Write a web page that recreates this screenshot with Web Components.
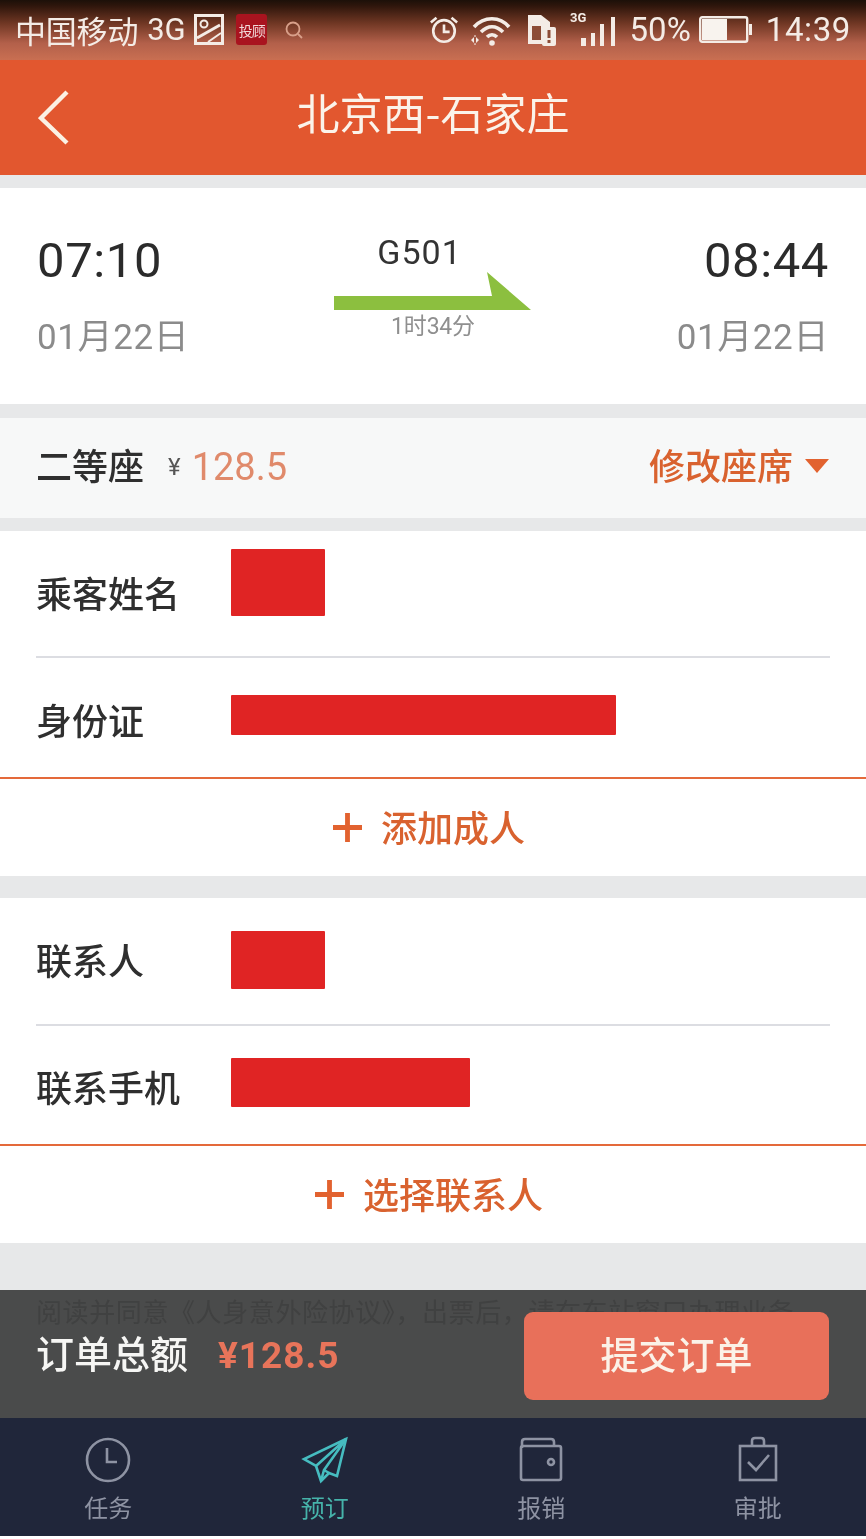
<!DOCTYPE html>
<html lang="zh">
<head>
<meta charset="utf-8">
<title>北京西-石家庄</title>
<style>
html, body { margin: 0; padding: 0; background: #fff; }
body { font-family: "Noto Sans CJK SC", "Liberation Sans", sans-serif; }
app-page { width: 866px; height: 1539px; }
</style>
</head>
<body>
<app-page>
  <status-bar></status-bar>
  <title-bar>北京西-石家庄</title-bar>
  <trip-card></trip-card>
  <seat-row></seat-row>
  <form-group add="添加成人">
    <form-field label="乘客姓名" mask="94" mask-h="67" shift="-11" nudge="-1.5" h="127"></form-field>
    <form-field label="身份证" mask="385" mask-h="40" shift="-3" nudge="1" h="119"></form-field>
  </form-group>
  <form-group add="选择联系人" class="contacts">
    <form-field label="联系人" mask="94" mask-h="58" shift="-1.5" nudge="-2" h="128"></form-field>
    <form-field label="联系手机" mask="239" mask-h="49" shift="-2.5" nudge="0.5" h="118"></form-field>
  </form-group>
  <order-bar></order-bar>
  <tab-bar></tab-bar>
</app-page>

<script>
const latin = 'Roboto, "Noto Sans CJK SC", sans-serif'

class AppPage extends HTMLElement {
  constructor () {
    super()
    this.attachShadow({ mode: 'open' })
    this.shadowRoot.innerHTML = `
<style>
:host { display: flex; flex-direction: column; background: #e7e8e9; overflow: hidden; filter: blur(.4px); }
::slotted(.contacts) { margin-top: 22px; }
</style>
<slot></slot>`
  }
}

class StatusBar extends HTMLElement {
  constructor () {
    super()
    this.attachShadow({ mode: 'open' })
    this.shadowRoot.innerHTML = `
<style>
:host {
  display: flex; align-items: center; height: 60px; padding: 0 15px; box-sizing: border-box;
  background: linear-gradient(#1c1009 0, #2f160c 10%, #6e3623 38%, #b3604a 72%, #c96f52 100%);
  color: #f4ece6; font: 30px ${latin}; white-space: nowrap;
}
.carrier { font-size: 31px; letter-spacing: -.2px; }
.net { margin-left: 9px; font-size: 31px; letter-spacing: -.2px; }
svg { display: block; flex: none; }
.pic { margin-left: 9px; }
.badge {
  margin-left: 12px; width: 31px; height: 31px; border-radius: 3px; background: #a9141f; color: #f1d9d9;
  font: 14px "Noto Sans CJK SC", sans-serif; display: flex; align-items: center; justify-content: center; letter-spacing: -1px;
}
.search { margin-left: 17px; }
.right { margin-left: auto; display: flex; align-items: center; }
.pct { margin-left: 14px; font-size: 33px; }
.clock { margin-left: 14px; font-size: 33px; letter-spacing: .6px; }
.battery { margin-left: 8px; }
</style>
<span class="carrier">中国移动</span><span class="net">3G</span>
<svg class="pic" width="30" height="31" viewBox="0 0 30 31" fill="none" stroke="#f4ece6" stroke-width="3">
  <rect x="1.5" y="1.5" width="27" height="28"/><circle cx="10" cy="10" r="3.5" stroke-width="2"/><path d="M3 24 L26 11" stroke-width="3"/><path d="M14 28 L27 19" stroke-width="2"/>
</svg>
<span class="badge">投顾</span>
<svg class="search" width="20" height="20" viewBox="0 0 20 20" fill="none" stroke="#d9a08a" stroke-width="1.8">
  <circle cx="9" cy="9" r="6.5"/><path d="M14 14 L18 18"/>
</svg>
<div class="right">
  <svg width="30" height="32" viewBox="0 0 32 32" fill="none" stroke="#f4ece6" stroke-width="2.8">
    <circle cx="16" cy="17" r="11.5"/><path d="M16 10 V18 H22"/><path d="M2 8 L8 3 M30 8 L24 3"/>
  </svg>
  <svg style="margin-left:10px" width="44" height="32" viewBox="0 0 42 32" fill="none" stroke="#f4ece6" stroke-width="3.6">
    <path d="M4 13 C14 2 30 2 39 13"/><path d="M11 18 C18 11 26 11 33 18"/><path d="M17 23 C20 20 24 20 27 23"/>
    <circle cx="22" cy="29" r="2.8" fill="#f4ece6" stroke="none"/>
    <path d="M1 26 L6 21 V31 Z M9 26 L4 21 V31 Z" fill="#f4ece6" stroke="none"/>
  </svg>
  <svg style="margin-left:14px" width="30" height="32" viewBox="0 0 30 32">
    <path d="M1 1 H14 L23 8 V30 H1 Z" fill="#f4ece6"/><rect x="5" y="12" width="9" height="14" fill="#8d4c36"/>
    <rect x="15" y="13" width="14" height="19" rx="2" fill="#f4ece6"/><rect x="20.5" y="16" width="3" height="8" fill="#8d4c36"/><rect x="20.5" y="26" width="3" height="3" fill="#8d4c36"/>
  </svg>
  <svg style="margin-left:13px" width="46" height="46" viewBox="0 0 46 46">
    <text x="0" y="15" font-family="Roboto" font-size="13" font-weight="bold" fill="#f4ece6">3G</text>
    <g fill="#f4ece6"><rect x="11" y="31" width="5" height="8"/><rect x="21" y="26" width="4" height="13"/><rect x="30" y="17" width="4" height="22"/><rect x="41" y="10" width="4" height="29"/></g>
  </svg>
  <span class="pct">50%</span>
  <svg class="battery" width="53" height="27" viewBox="0 0 53 27">
    <rect x="1.2" y="1.2" width="47" height="24.6" rx="2" fill="none" stroke="#f4ece6" stroke-width="2.4"/>
    <rect x="3" y="3" width="25" height="21" fill="#f8f3ee"/>
    <rect x="50" y="8" width="3" height="11" fill="#f4ece6"/>
  </svg>
  <span class="clock">14:39</span>
</div>`
  }
}

class TitleBar extends HTMLElement {
  constructor () {
    super()
    this.attachShadow({ mode: 'open' })
    this.shadowRoot.innerHTML = `
<style>
:host {
  display: flex; align-items: center; justify-content: center; position: relative;
  height: 115px; margin-bottom: 13px; background: #e2572f; color: #fbf3ea;
  font: 400 43px "Noto Sans CJK SC", sans-serif; box-sizing: border-box; padding-bottom: 12px;
}
svg { position: absolute; left: 38px; top: 30px; }
</style>
<svg width="32" height="56" viewBox="0 0 32 56" fill="none" stroke="#fbf1e4" stroke-width="4.4">
  <path d="M29 2 L3 28 L29 53"/>
</svg>
<slot></slot>`
  }
}

class TripCard extends HTMLElement {
  constructor () {
    super()
    this.attachShadow({ mode: 'open' })
    this.shadowRoot.innerHTML = `
<style>
:host {
  display: grid; grid-template-columns: 1fr 1fr 1fr; height: 217px; margin-bottom: 14px; padding: 0 37px;
  box-sizing: border-box; background: #fff; font-family: ${latin}; color: #2b2b2b;
}
.end { display: flex; flex-direction: column; padding-top: 43px; }
.end.arrive { align-items: flex-end; }
.time { font-size: 49px; line-height: 60px; letter-spacing: .6px; }
.date { margin-top: 25px; font-size: 35px; line-height: 44px; color: #8b8b8b; letter-spacing: .6px; }
.mid { display: flex; flex-direction: column; align-items: center; }
.no { font-size: 34px; line-height: 40px; margin-top: 44px; margin-right: 27px; letter-spacing: 1px; color: #333; }
svg { display: block; margin-right: 2px; }
.dur { font-size: 23px; line-height: 28px; color: #8f8f8f; margin-top: 1px; letter-spacing: -.2px; }
</style>
<div class="end"><span class="time">07:10</span><span class="date">01月22日</span></div>
<div class="mid">
  <span class="no">G501</span>
  <svg width="197" height="40" viewBox="0 0 197 40"><path d="M0 24 H158 L153 0 L197 38 H0 Z" fill="#8cbf3f"/></svg>
  <span class="dur">1时34分</span>
</div>
<div class="end arrive"><span class="time">08:44</span><span class="date">01月22日</span></div>`
  }
}

class SeatRow extends HTMLElement {
  constructor () {
    super()
    this.attachShadow({ mode: 'open' })
    this.shadowRoot.innerHTML = `
<style>
:host {
  display: flex; align-items: center; height: 100px; margin-bottom: 13px; padding: 0 37px 9px; box-sizing: border-box;
  background: #f7f8f8; font-family: "Noto Sans CJK SC", sans-serif; font-weight: 500; color: #2f2f2f;
}
.seat { font-size: 36px; margin-left: -1px; }
.yen { margin-left: 24px; font: 24px ${latin}; color: #555; margin-top: 6px; }
.price { margin-left: 11px; font: 38px ${latin}; color: #e08a6b; margin-top: 6px; }
.edit { margin-left: auto; font-size: 36px; color: #d9622f; }
svg { margin-left: 12px; margin-top: 4px; }
</style>
<span class="seat">二等座</span><span class="yen">¥</span><span class="price">128.5</span>
<span class="edit">修改座席</span>
<svg width="24" height="14" viewBox="0 0 24 14"><path d="M0 0 H24 L12 14 Z" fill="#e2622f"/></svg>`
  }
}

class FormGroup extends HTMLElement {
  constructor () {
    super()
    this.attachShadow({ mode: 'open' })
    this.shadowRoot.innerHTML = `
<style>
:host { display: block; background: #fff; font-family: "Noto Sans CJK SC", sans-serif; font-weight: 500; }
.add {
  display: flex; align-items: center; justify-content: center; gap: 19px; height: 93px; padding: 0 8px 4px 0;
  border-top: 2px solid #e4693a; color: #d9622f; font-size: 36px;
}
svg { display: block; margin-top: 4px; }
</style>
<slot></slot>
<div class="add">
  <svg width="29" height="29" viewBox="0 0 30 30"><path d="M12.5 0 H17.5 V12.5 H30 V17.5 H17.5 V30 H12.5 V17.5 H0 V12.5 H12.5 Z" fill="#e2622f"/></svg>
  <span class="text"></span>
</div>`
  }

  connectedCallback () {
    this.shadowRoot.querySelector('.text').textContent = this.getAttribute('add')
  }
}

class FormField extends HTMLElement {
  constructor () {
    super()
    this.attachShadow({ mode: 'open' })
    this.shadowRoot.innerHTML = `
<style>
:host { display: flex; align-items: center; margin: 0 36px; box-sizing: border-box; color: #2f2f2f; font-size: 36px; }
:host(:not(:last-child)) { border-bottom: 2px solid #dcdde2; }
.label { width: 195px; flex: none; }
.mask { background: #e02424; border-radius: 1px; }
</style>
<span class="label"></span><span class="mask"></span>`
  }

  connectedCallback () {
    this.style.height = this.getAttribute('h') + 'px'
    const label = this.shadowRoot.querySelector('.label')
    label.textContent = this.getAttribute('label')
    label.style.marginTop = (this.getAttribute('nudge') * 2) + 'px'
    const mask = this.shadowRoot.querySelector('.mask')
    mask.style.width = this.getAttribute('mask') + 'px'
    mask.style.height = this.getAttribute('mask-h') + 'px'
    mask.style.marginTop = (this.getAttribute('shift') * 2) + 'px'
  }
}

class OrderBar extends HTMLElement {
  constructor () {
    super()
    this.attachShadow({ mode: 'open' })
    this.shadowRoot.innerHTML = `
<style>
:host {
  display: flex; align-items: center; height: 128px; margin-top: 47px; padding: 0 37px; box-sizing: border-box;
  background: #4a4b4b; position: relative; font-family: "Noto Sans CJK SC", sans-serif; font-weight: 500;
}
.ghost { position: absolute; left: 36px; top: 9px; font: 400 26px/28px ${latin}; color: #404141; white-space: nowrap; letter-spacing: .6px; }
.label { color: #f6f6f4; font: 500 38px/46px ${latin}; position: relative; margin-left: -1px; margin-top: 2px; }
.total { margin-left: 30px; margin-top: 2px; color: #e8745a; font: bold 37px ${latin}; letter-spacing: 1px; position: relative; }
.submit {
  margin-left: auto; width: 305px; height: 88px; margin-top: 3px; padding-bottom: 6px; box-sizing: border-box; border-radius: 9px; background: #e8705a; color: #fbf2e8;
  font-size: 38px; display: flex; align-items: center; justify-content: center; position: relative;
}
</style>
<span class="ghost">阅读并同意《人身意外险协议》，出票后，请在车站窗口办理业务</span>
<span class="label">订单总额</span><span class="total">¥128.5</span>
<span class="submit">提交订单</span>`
  }
}

const tabs = [
  { label: '任务', icon: '<circle cx="24" cy="24" r="21"/><path d="M23 12 V26 H33"/>' },
  { label: '预订', on: true, icon: '<path d="M45 3 L3 23 L15 30 L20 45 L28 37 L36 40 Z"/><path d="M45 3 L15 30 M45 3 L23 34 L20 45 M23 34 L28 37"/>' },
  { label: '报销', icon: '<path d="M5 12 V6 Q5 3 8 3 H34 Q37 3 37 6 V10"/><rect x="4" y="10" width="40" height="34" rx="2"/><circle cx="34" cy="26" r="3"/>' },
  { label: '审批', icon: '<rect x="6" y="10" width="36" height="34"/><path d="M18 10 V5 Q18 2 21 2 H27 Q30 2 30 5 V10"/><path d="M14 26 L22 34 L35 19"/>' }
]

class TabBar extends HTMLElement {
  constructor () {
    super()
    this.attachShadow({ mode: 'open' })
    this.shadowRoot.innerHTML = `
<style>
:host {
  display: grid; grid-template-columns: repeat(4, 1fr); height: 121px; border-bottom: 3px solid #fff; box-sizing: border-box;
  background: #20263a; font-family: "Noto Sans CJK SC", sans-serif; color: #8e93a3;
}
.tab { display: flex; flex-direction: column; align-items: center; padding-top: 18px; }
.tab.on { color: #46b3aa; }
svg { display: block; fill: none; stroke: currentColor; stroke-width: 2.6; }
.tab.on svg { stroke: #46bcc0; }
span { font-size: 24px; line-height: 30px; margin-top: 8px; }
</style>
${tabs.map(t => `<div class="tab${t.on ? ' on' : ''}"><svg width="48" height="48" viewBox="0 0 48 48">${t.icon}</svg><span>${t.label}</span></div>`).join('')}`
  }
}

customElements.define('app-page', AppPage)
customElements.define('status-bar', StatusBar)
customElements.define('title-bar', TitleBar)
customElements.define('trip-card', TripCard)
customElements.define('seat-row', SeatRow)
customElements.define('form-group', FormGroup)
customElements.define('form-field', FormField)
customElements.define('order-bar', OrderBar)
customElements.define('tab-bar', TabBar)
</script>
</body>
</html>
